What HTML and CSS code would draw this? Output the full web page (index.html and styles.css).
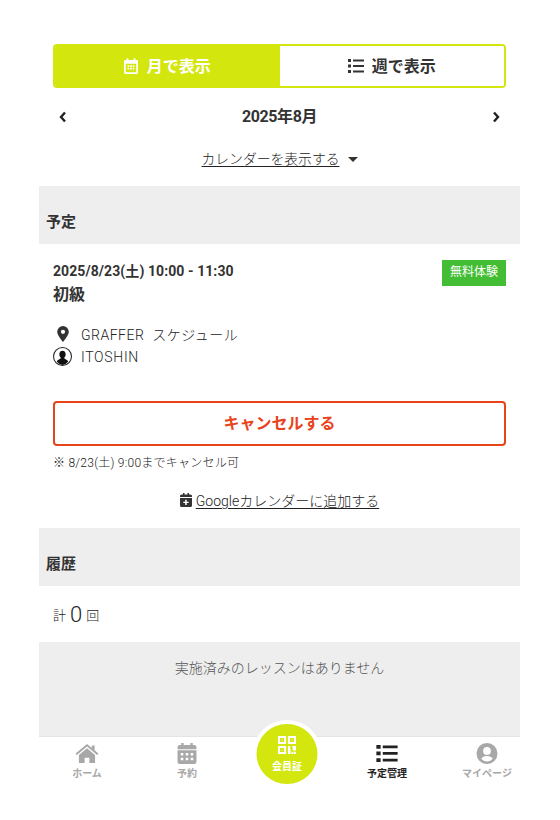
FILE: index.html
```html
<!DOCTYPE html>
<html lang="ja">
<head>
<meta charset="utf-8">
<title>予定管理</title>
<link rel="stylesheet" href="styles.css">
</head>
<body>
<main class="page">
  <div class="pad">
    <div class="tabs">
      <a class="tab tab-on">
        <svg class="tab-ico" viewBox="0 0 16 18"><path fill="currentColor" fill-rule="evenodd" d="M3 0h2v2h6V0h2v2h1.500A1.500 1.500 0 0 1 16 3.500v13a1.500 1.500 0 0 1-1.500 1.500h-13A1.500 1.500 0 0 1 0 16.500v-13A1.500 1.500 0 0 1 1.500 2H3zM2 6.500V16h12V6.500zM4 8h2v2H4zm3 0h2v2H7zm3 0h2v2h-2zm-6 3h2v2H4zm3 0h2v2H7zm3 0h2v2h-2z"/></svg>
        <span>月で表示</span>
      </a>
      <a class="tab">
        <svg class="tab-ico-list" viewBox="0 0 16 14"><path fill="currentColor" d="M0 0h3v3H0zm5 .5h11v2H5zM0 5.500h3v3H0zm5 .5h11v2H5zM0 11h3v3H0zm5 .5h11v2H5z"/></svg>
        <span>週で表示</span>
      </a>
    </div>
    <div class="month">
      <svg class="chev" viewBox="0 0 8 12"><path d="M6 1.500 2 6l4 4.500" fill="none" stroke="currentColor" stroke-width="2.400"/></svg>
      <span>2025年8月</span>
      <svg class="chev" viewBox="0 0 8 12"><path d="M2 1.500 6 6l-4 4.500" fill="none" stroke="currentColor" stroke-width="2.400"/></svg>
    </div>
    <div class="toggle"><a class="link">カレンダーを表示する</a><i class="caret"></i></div>
  </div>

  <h2 class="band">予定</h2>
  <section class="event">
    <div class="event-head">
      <div>
        <p class="when">2025/8/23(土) 10:00 - 11:30</p>
        <p class="title">初級</p>
      </div>
      <span class="badge">無料体験</span>
    </div>
    <ul class="meta">
      <li>
        <span class="meta-ico"><svg class="pin" viewBox="0 0 12 16"><path fill="currentColor" fill-rule="evenodd" d="M6 0a5.800 5.800 0 0 1 5.800 5.800C11.800 9 8 13.500 6 16 4 13.500.2 9 .2 5.800A5.800 5.800 0 0 1 6 0zm0 3.700a2.100 2.100 0 1 0 0 4.200 2.100 2.100 0 0 0 0-4.200z"/></svg></span>
        <span class="place">GRAFFER&nbsp; スケジュール</span>
      </li>
      <li>
        <span class="meta-ico"><svg class="avatar" viewBox="0 0 18 18"><circle cx="9" cy="9" r="8.500" fill="#fff" stroke="#222" stroke-width="1"/><path fill="#111" d="M9 3.500c2 0 3 1.500 3 3.300 0 1.500-.7 2.800-1.500 3.500 0 1 2.600 1.500 4 3.500A8 8 0 0 1 9 17a8 8 0 0 1-5.500-3.200c1.400-2 4-2.500 4-3.500C6.700 9.600 6 8.300 6 6.800c0-1.800 1-3.300 3-3.300z"/></svg></span>
        <span>ITOSHIN</span>
      </li>
    </ul>
    <a class="cancel">キャンセルする</a>
    <p class="note">※ 8/23(土) 9:00までキャンセル可</p>
    <div class="gcal">
      <svg class="gcal-ico" viewBox="0 0 12 14"><path fill="currentColor" fill-rule="evenodd" d="M3 0h1.500v1.500h3V0H9v1.500h1.500A1.500 1.500 0 0 1 12 3v1H0V3a1.500 1.500 0 0 1 1.500-1.500H3zM0 5h12v7.500a1.500 1.500 0 0 1-1.500 1.500h-9A1.500 1.500 0 0 1 0 12.500zm5.200 1.800v1.900H3.300v1.400h1.900V12h1.500v-1.900h1.900V8.700H6.700V6.800z"/></svg>
      <a class="link">Googleカレンダーに追加する</a>
    </div>
  </section>

  <h2 class="band">履歴</h2>
  <div class="total">計 <b class="count">0</b> 回</div>
  <div class="empty">実施済みのレッスンはありません</div>
</main>

<nav class="nav">
  <div class="nav-items">
    <a class="nav-item">
      <svg class="nav-ico ico-home" viewBox="0 0 24 20"><path fill="currentColor" d="M12 0l5 4.200V1.500h3v5.200l4 3.400-1.300 1.500L12 2.700 1.300 11.600 0 10.100zM12 4.500l8.500 7.100V20h-6v-5.500h-5V20h-6v-8.400z"/></svg>
      <span>ホーム</span>
    </a>
    <a class="nav-item">
      <svg class="nav-ico" viewBox="0 0 18 20"><path fill="currentColor" fill-rule="evenodd" d="M3.500 0h2.300v2h6.400V0h2.300v2H16a2 2 0 0 1 2 2v2H0V4a2 2 0 0 1 2-2h1.500zM0 7h18v11a2 2 0 0 1-2 2H2a2 2 0 0 1-2-2zm3 2.500V12h2.500V9.500zm4.800 0V12h2.400V9.500zm4.700 0V12H15V9.500zM3 14v2.500h2.500V14zm4.800 0v2.500h2.400V14zm4.700 0v2.500H15V14z"/></svg>
      <span>予約</span>
    </a>
    <a class="nav-item nav-qr">
      <span class="qr-disc">
        <svg class="qr-ico" viewBox="0 0 20 20"><path fill="currentColor" fill-rule="evenodd" d="M0 0h9v9H0zm2.200 2.200v4.600h4.600V2.200zM11 0h9v9h-9zm2.200 2.200v4.600h4.600V2.200zM0 11h9v9H0zm2.200 2.200v4.600h4.600v-4.600zM4 4h1v1H4zm11 0h1v1h-1zM4 15h1v1H4zm7-4h2.500v3H16v-3h4v5h-3.500v-2H14v6h-3zm6.500 6.500H20V20h-2.500zm-2.500 0h2V20h-2z"/></svg>
        <span>会員証</span>
      </span>
    </a>
    <a class="nav-item nav-current">
      <svg class="nav-ico ico-list" viewBox="0 0 20 16"><path fill="currentColor" d="M0 0h4v3.500H0zm6 .5h14v2.500H6zM0 6.200h4v3.500H0zm6 .5h14v2.500H6zM0 12.500h4V16H0zm6 .5h14v2.500H6z"/></svg>
      <span>予定管理</span>
    </a>
    <a class="nav-item">
      <svg class="nav-ico" viewBox="0 0 20 20"><path fill="currentColor" fill-rule="evenodd" d="M10 0a10 10 0 1 1 0 20 10 10 0 0 1 0-20zm0 3.800a3.700 3.700 0 1 0 0 7.400 3.700 3.700 0 0 0 0-7.400zM10 12.300c-2.600 0-4.700 1-5.500 2.700A7.400 7.400 0 0 0 10 17.600a7.400 7.400 0 0 0 5.500-2.600c-.8-1.700-2.900-2.700-5.500-2.700z"/></svg>
      <span>マイページ</span>
    </a>
  </div>
</nav>
</body>
</html>
```

FILE: styles.css
```css
* { box-sizing: border-box; }
html, body { margin: 0; padding: 0; }
body {
  background: #fff;
  color: #333;
  font-family: Roboto, "Noto Sans CJK JP", sans-serif;
  height: 820px;
  overflow: hidden;
}
p, ul, h2 { margin: 0; padding: 0; }
ul { list-style: none; }
.page { width: 481px; margin-left: 39px; }
.pad { padding: 44px 14px 0; }

.tabs {
  display: flex;
  height: 44px;
  border: 2px solid #d3e60d;
  border-radius: 4px;
  overflow: hidden;
}
.tab {
  flex: 1;
  display: flex;
  align-items: center;
  justify-content: center;
  gap: 8px;
  padding-bottom: 3px;
  font-size: 16px;
  font-weight: 700;
  color: #333;
  background: #fff;
}
.tab-on { background: #d3e60d; color: #fff; gap: 9px; }
.tab-ico { width: 14px; height: 16px; margin-top: 3px; }
.tab-ico-list { width: 16px; height: 14px; margin-top: 3px; }

.month {
  display: flex;
  justify-content: space-between;
  align-items: center;
  height: 56px;
  padding: 0 6px 2px;
  font-size: 16px;
  font-weight: 700;
  letter-spacing: -0.4px;
}
.chev { width: 8px; height: 12px; color: #222; margin-top: 4px; }

.toggle {
  display: flex;
  justify-content: center;
  align-items: center;
  gap: 9px;
  height: 30px;
  padding: 0 0 2px 1px;
  font-size: 13.8px;
  font-weight: 300;
  color: #222;
}
.link { color: #222; text-decoration: underline; text-underline-offset: 2px; }
.caret {
  width: 0;
  height: 0;
  margin-top: 3px;
  border-left: 5px solid transparent;
  border-right: 5px solid transparent;
  border-top: 5px solid #333;
}

.band {
  display: flex;
  align-items: flex-end;
  height: 58px;
  margin-top: 12px;
  padding: 0 7px 11px;
  background: #eee;
  font-size: 15px;
  line-height: 22px;
  font-weight: 700;
}
.event { padding: 16px 14px 0; }
.event + .band { margin-top: 17px; }
.event-head { display: flex; justify-content: space-between; align-items: flex-start; }
.when { font-size: 14px; line-height: 22px; font-weight: 700; letter-spacing: 0.08px; }
.title { margin-top: 1px; font-size: 16px; line-height: 24px; font-weight: 700; }
.badge {
  width: 64px;
  height: 26px;
  background: #43bd33;
  color: #fff;
  font-size: 12px;
  line-height: 24px;
  text-align: center;
}
.meta { margin-top: 15px; font-size: 14px; font-weight: 300; letter-spacing: 0.7px; color: #222; }
.place { letter-spacing: 0.5px; }
.meta li { display: flex; align-items: center; gap: 9px; height: 23px; }
.meta-ico { display: flex; justify-content: center; width: 19px; color: #333; }
.pin { width: 12px; height: 16px; }
.avatar { width: 19px; height: 19px; }

.cancel {
  display: block;
  height: 45px;
  margin-top: 33px;
  border: 2px solid #e8431b;
  border-radius: 4px;
  color: #e8431b;
  font-size: 16px;
  font-weight: 700;
  line-height: 41px;
  text-align: center;
}
.note { margin-top: 8px; font-size: 12px; line-height: 18px; font-weight: 300; letter-spacing: 0.25px; color: #222; }
.gcal {
  display: flex;
  justify-content: center;
  align-items: center;
  gap: 4px;
  margin-top: 17px;
  height: 22px;
  font-size: 14px;
  font-weight: 300;
  color: #222;
}
.gcal-ico { width: 12px; height: 14px; color: #333; }

.total {
  display: flex;
  align-items: center;
  gap: 4px;
  height: 56px;
  padding-left: 14px;
  font-size: 13px;
  font-weight: 300;
  color: #222;
}
.count { font-size: 22px; font-weight: 300; }
.empty {
  height: 94px;
  padding-top: 14px;
  background: #eee;
  color: #555;
  font-size: 14px;
  line-height: 24px;
  font-weight: 300;
  text-align: center;
}

.nav {
  position: absolute;
  left: 39px;
  top: 736px;
  width: 481px;
  height: 84px;
  background: #fff;
  border-top: 1px solid #e4e4e4;
}
.nav-items { display: flex; width: 500px; margin-left: -2px; }
.nav-item {
  flex: 1;
  display: flex;
  flex-direction: column;
  align-items: center;
  padding-top: 6px;
  color: #a8a8a8;
  font-size: 10px;
  font-weight: 700;
  line-height: 14px;
}
.nav-ico { width: 24px; height: 21px; margin-bottom: 3px; }
.ico-home { height: 19px; margin: 1px 0 4px; }
.ico-list { height: 17px; margin: 2px 0 5px; }
.nav-current { color: #222; }
.nav-qr { position: relative; }
.qr-disc {
  position: absolute;
  left: 50%;
  top: -17px;
  transform: translateX(-50%);
  width: 69px;
  height: 68px;
  display: flex;
  flex-direction: column;
  align-items: center;
  padding-top: 12px;
  border: 4px solid #fff;
  border-radius: 50%;
  background: #d3e60d;
  color: #fff;
}
.qr-ico { width: 19px; height: 18px; margin-bottom: 6px; }
```
